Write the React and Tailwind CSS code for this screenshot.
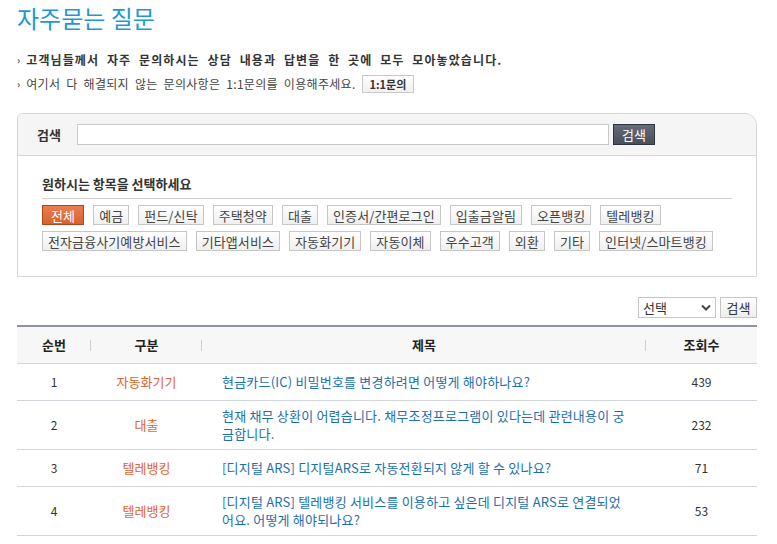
const FONT = { fontFamily: '"Noto Sans CJK KR", "Noto Sans", sans-serif' };

const cats1 = ["예금", "펀드/신탁", "주택청약", "대출", "인증서/간편로그인", "입출금알림", "오픈뱅킹", "텔레뱅킹"];
const cats2 = ["전자금융사기예방서비스", "기타앱서비스", "자동화기기", "자동이체", "우수고객", "외환", "기타", "인터넷/스마트뱅킹"];

// title lines are split where the original list breaks them
const rows = [
  { no: 1, cat: "자동화기기", title: ["현금카드(IC) 비밀번호를 변경하려면 어떻게 해야하나요?"], hits: 439 },
  { no: 2, cat: "대출", title: ["현재 채무 상환이 어렵습니다. 채무조정프로그램이 있다는데 관련내용이 궁", "금합니다."], hits: 232 },
  { no: 3, cat: "텔레뱅킹", title: ["[디지털 ARS] 디지털ARS로 자동전환되지 않게 할 수 있나요?"], hits: 71 },
  { no: 4, cat: "텔레뱅킹", title: ["[디지털 ARS] 텔레뱅킹 서비스를 이용하고 싶은데 디지털 ARS로 연결되었", "어요. 어떻게 해야되나요?"], hits: 53 },
];

function CatButton({ label, active }) {
  return (
    <span
      className={
        active
          ? "inline-flex h-[20px] items-center border border-[#a9481f] bg-gradient-to-b from-[#ea7d4d] to-[#d9612f] px-[8px] text-[13px] leading-none tracking-[0.1px] text-white"
          : "inline-flex h-[20px] items-center border border-[#c6c6c6] bg-gradient-to-b from-white to-[#efefef] px-[5px] text-[13px] leading-none tracking-[0.1px] text-[#444]"
      }
    >
      {label}
    </span>
  );
}

function Chevron() {
  return <span className="mr-[6px] text-[10px] font-bold tracking-normal text-[#555]">›</span>;
}

export default function App() {
  return (
    <div className="w-[777px] min-h-[544px] bg-white pl-[17px] pr-[20px] text-[12px] text-[#333]" style={FONT}>
      <h1 className="pt-[2px] text-[24px] leading-[32px] text-[#1e98d4]">자주묻는 질문</h1>

      <div className="mt-[16px] flex items-center whitespace-pre text-[12px] font-bold leading-[20px] tracking-[1.1px] text-[#333] [word-spacing:4px]">
        <Chevron />
        고객님들께서 자주 문의하시는 상담 내용과 답변을 한 곳에 모두 모아놓았습니다.
      </div>
      <div className="mt-[4px] flex items-center whitespace-pre text-[12px] leading-[20px] tracking-[0.3px] text-[#444] [word-spacing:3px]">
        <Chevron />
        여기서 다 해결되지 않는 문의사항은 1:1문의를 이용해주세요.
        <span className="ml-[6px] inline-flex h-[18px] items-center border border-[#c8c8c8] bg-gradient-to-b from-white to-[#f0f0f0] px-[7px] text-[11px] font-bold tracking-normal text-[#333] [word-spacing:0]">
          1:1문의
        </span>
      </div>

      <div className="mt-[19px] rounded-tl-[6px] rounded-tr-[12px] border border-[#d6d6d6]">
        <div className="flex h-[42px] items-center rounded-tl-[6px] rounded-tr-[12px] border-b border-[#d6d6d6] bg-[#f5f5f5] px-[19px]">
          <span className="w-[40px] text-[13px] font-bold text-[#333]">검색</span>
          <div className="h-[21px] w-[532px] border border-[#c9c9c9] bg-white" />
          <span className="ml-[4px] inline-flex h-[21px] w-[42px] items-center justify-center border border-[#2f3440] bg-gradient-to-b from-[#656b78] to-[#494e5a] text-[13px] text-white">
            검색
          </span>
        </div>
        <div className="px-[24px] pb-[25px] pt-[18px]">
          <div className="border-b border-[#d0d0d0] pb-[4px] text-[13px] font-bold leading-[20px] text-[#333]">
            원하시는 항목을 선택하세요
          </div>
          <div className="mt-[6px] flex flex-wrap gap-x-[9px]">
            <CatButton label="전체" active />
            {cats1.map((c) => (
              <CatButton key={c} label={c} />
            ))}
          </div>
          <div className="mt-[6px] flex flex-wrap gap-x-[9px]">
            {cats2.map((c) => (
              <CatButton key={c} label={c} />
            ))}
          </div>
        </div>
      </div>

      <div className="mt-[20px] flex justify-end gap-[4px]">
        <div className="flex h-[21px] w-[78px] items-center justify-between border border-[#c6c6c6] bg-white pl-[4px] pr-[4px] text-[13px] text-[#333]">
          선택
          <svg width="10" height="7" viewBox="0 0 10 7">
            <path d="M1 1.5 L5 5.5 L9 1.5" fill="none" stroke="#444" strokeWidth="2" />
          </svg>
        </div>
        <span className="inline-flex h-[21px] w-[37px] items-center justify-center border border-[#c6c6c6] bg-gradient-to-b from-white to-[#eee] text-[13px] text-[#333]">
          검색
        </span>
      </div>

      <table className="mt-[7px] w-full border-collapse border-t-2 border-[#8c939e] text-[12px]">
        <colgroup>
          <col className="w-[74px]" />
          <col className="w-[111px]" />
          <col />
          <col className="w-[111px]" />
        </colgroup>
        <thead>
          <tr className="h-[37px] border-b border-[#d2d5da] bg-[#f7f7f7] text-[13px] font-bold text-[#222]">
            <th className="relative font-bold">
              순번
              <span className="absolute right-0 top-[13px] h-[11px] w-px bg-[#cfcfcf]" />
            </th>
            <th className="relative font-bold">
              구분
              <span className="absolute right-0 top-[13px] h-[11px] w-px bg-[#cfcfcf]" />
            </th>
            <th className="relative font-bold">
              제목
              <span className="absolute right-0 top-[13px] h-[11px] w-px bg-[#cfcfcf]" />
            </th>
            <th className="font-bold">조회수</th>
          </tr>
        </thead>
        <tbody>
          {rows.map((r) => (
            <tr key={r.no} className="border-b border-[#d2d5da]">
              <td className="h-[37px] text-center text-[#333]">{r.no}</td>
              <td className="text-center text-[13px] text-[#e0642f]">{r.cat}</td>
              <td className="py-[6px] pl-[20px] pr-[10px] text-[13px] leading-[18px] tracking-[0.2px] text-[#1b6fae]">
                {r.title.map((line) => (
                  <div key={line} className="whitespace-nowrap">
                    {line}
                  </div>
                ))}
              </td>
              <td className="text-center text-[#333]">{r.hits}</td>
            </tr>
          ))}
        </tbody>
      </table>
    </div>
  );
}
